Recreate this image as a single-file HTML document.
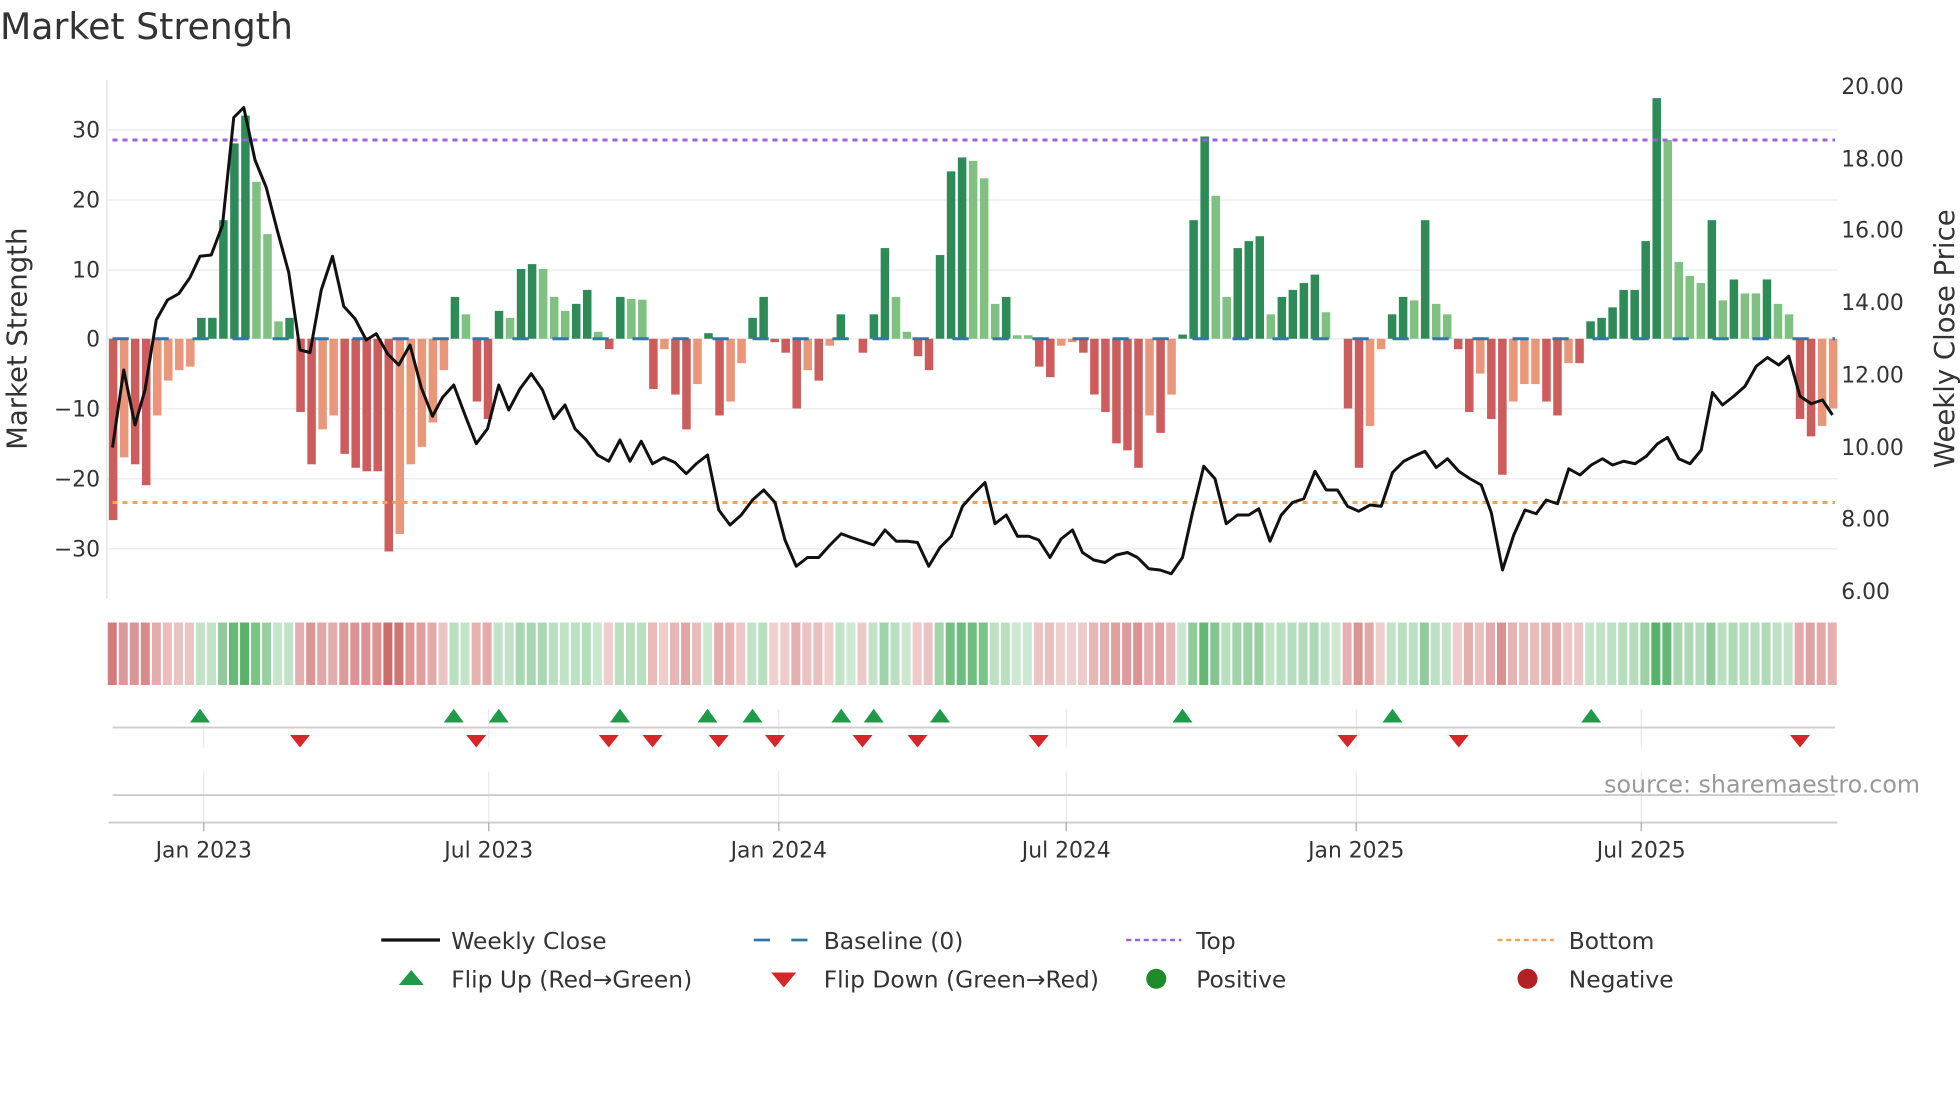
<!DOCTYPE html>
<html><head><meta charset="utf-8"><style>
html,body{margin:0;padding:0;background:#fff;width:1960px;height:1102px;overflow:hidden}
svg{display:block}
text{font-family:"DejaVu Sans","Liberation Sans",sans-serif;fill:#333}
</style></head><body>
<svg id="s" width="1960" height="1102" viewBox="0 0 1568 881.6" xmlns="http://www.w3.org/2000/svg">
<text x="0" y="31" font-size="29">Market Strength</text>
<g id="grid" stroke="#eceef3" stroke-width="1.2">
<line x1="86" x2="1470" y1="104" y2="104"/><line x1="86" x2="1470" y1="160" y2="160"/><line x1="86" x2="1470" y1="216" y2="216"/><line x1="86" x2="1470" y1="271" y2="271"/><line x1="86" x2="1470" y1="327" y2="327"/><line x1="86" x2="1470" y1="383" y2="383"/><line x1="86" x2="1470" y1="439" y2="439"/>
</g>
<line x1="85.5" x2="85.5" y1="64" y2="479" stroke="#e4e4e4" stroke-width="1.2"/>
<g font-size="17.5" text-anchor="end">
<text x="80" y="110">30</text><text x="80" y="166">20</text><text x="80" y="222">10</text><text x="80" y="277">0</text><text x="80" y="333">−10</text><text x="80" y="389">−20</text><text x="80" y="445">−30</text>
</g>
<g font-size="17.5">
<text x="1473" y="75">20.00</text><text x="1473" y="133">18.00</text><text x="1473" y="190">16.00</text><text x="1473" y="248">14.00</text><text x="1473" y="306">12.00</text><text x="1473" y="364">10.00</text><text x="1473" y="421">8.00</text><text x="1473" y="479">6.00</text>
</g>
<text font-size="22" transform="translate(21,271) rotate(-90)" text-anchor="middle">Market Strength</text>
<text font-size="22" transform="translate(1563,271) rotate(-90)" text-anchor="middle">Weekly Close Price</text>
<g id="bars"></g>
<line x1="90" x2="1468" y1="271" y2="271" stroke="#2f77ad" stroke-width="2.4" stroke-dasharray="13,19"/>
<line x1="90" x2="1468" y1="112" y2="112" stroke="#a35ee0" stroke-width="2.4" stroke-dasharray="4,4"/>
<line x1="90" x2="1468" y1="402" y2="402" stroke="#f3a25a" stroke-width="2.4" stroke-dasharray="4,4"/>
<polyline id="price" fill="none" stroke="#111" stroke-width="2.4" stroke-linejoin="round"></polyline>
<g id="heat"></g>
<g stroke="#e8eaf0" stroke-width="1">
<line x1="163" x2="163" y1="567" y2="598"/><line x1="391" x2="391" y1="567" y2="598"/><line x1="623" x2="623" y1="567" y2="598"/><line x1="853" x2="853" y1="567" y2="598"/><line x1="1085" x2="1085" y1="567" y2="598"/><line x1="1313" x2="1313" y1="567" y2="598"/>
<line x1="163" x2="163" y1="617" y2="658"/><line x1="391" x2="391" y1="617" y2="658"/><line x1="623" x2="623" y1="617" y2="658"/><line x1="853" x2="853" y1="617" y2="658"/><line x1="1085" x2="1085" y1="617" y2="658"/><line x1="1313" x2="1313" y1="617" y2="658"/>
</g>
<line x1="90" x2="1468" y1="582" y2="582" stroke="#ccc" stroke-width="1.5"/>
<line x1="90" x2="1468" y1="636" y2="636" stroke="#ccc" stroke-width="1.5"/>
<line x1="87" x2="1470" y1="658" y2="658" stroke="#ccc" stroke-width="1.5"/>
<g stroke="#aaa" stroke-width="1"><line x1="163" x2="163" y1="658" y2="665"/><line x1="391" x2="391" y1="658" y2="665"/><line x1="623" x2="623" y1="658" y2="665"/><line x1="853" x2="853" y1="658" y2="665"/><line x1="1085" x2="1085" y1="658" y2="665"/><line x1="1313" x2="1313" y1="658" y2="665"/></g>
<g id="flips"></g>
<g font-size="17.5" text-anchor="middle">
<text x="163" y="686">Jan 2023</text><text x="391" y="686">Jul 2023</text><text x="623" y="686">Jan 2024</text><text x="853" y="686">Jul 2024</text><text x="1085" y="686">Jan 2025</text><text x="1313" y="686">Jul 2025</text>
</g>
<text x="1536" y="634" font-size="19" text-anchor="end" style="fill:#999">source: sharemaestro.com</text>
<g font-size="18.7">
<line x1="305" x2="352" y1="752" y2="752" stroke="#111" stroke-width="2.6"/><text x="361" y="759">Weekly Close</text>
<line x1="603" x2="647" y1="752" y2="752" stroke="#2f77ad" stroke-width="2.2" stroke-dasharray="13,17"/><text x="659" y="759">Baseline (0)</text>
<line x1="901" x2="945" y1="752" y2="752" stroke="#a35ee0" stroke-width="2" stroke-dasharray="4,3"/><text x="957" y="759">Top</text>
<line x1="1198" x2="1243" y1="752" y2="752" stroke="#f3a25a" stroke-width="2" stroke-dasharray="4,3"/><text x="1255" y="759">Bottom</text>
<polygon points="319,788 339,788 329,776" fill="#1f9a48"/><text x="361" y="790">Flip Up (Red→Green)</text>
<polygon points="617,778 637,778 627,790" fill="#d62728"/><text x="659" y="790">Flip Down (Green→Red)</text>
<circle cx="925" cy="783" r="8" fill="#1f8a2a"/><text x="957" y="790">Positive</text>
<circle cx="1222" cy="783" r="8" fill="#b22222"/><text x="1255" y="790">Negative</text>
</g>
</svg>
<script>
var NS="http://www.w3.org/2000/svg";
function el(t,a,p){var e=document.createElementNS(NS,t);for(var k in a)e.setAttribute(k,a[k]);document.getElementById(p).appendChild(e);return e;}
var V=[[-26,1],[-17,0],[-18,1],[-21,1],[-11,0],[-6,0],[-4.5,0],[-4,0],[3,1],[3,1],[17,1],[28,1],[32,1],[22.5,0],[15,0],[2.5,0],[3,1],
[-10.5,1],[-18,1],[-13,0],[-11,0],[-16.5,1],[-18.5,1],[-19,1],[-19,1],[-30.5,1],[-28,0],[-18,0],[-15.5,0],[-12,0],[-4.5,0],[6,1],[3.5,0],
[-9,1],[-11.5,1],[4,1],[3,0],[10,1],[10.7,1],[10,0],[6,0],[4,0],[5,1],[7,1],[1,0],[-1.5,1],[6,1],[5.7,0],[5.6,0],[-7.2,1],[-1.5,0],[-8,1],[-13,1],[-6.5,0],[0.8,1],
[-11,1],[-9,0],[-3.5,0],[3,1],[6,1],[-0.5,1],[-2,1],[-10,1],[-4.5,0],[-6,1],[-1,0],[3.5,1],[0,0],[-2,1],[3.5,1],[13,1],[6,0],[1,0],[-2.5,1],[-4.5,1],
[12,1],[24,1],[26,1],[25.5,0],[23,0],[5,0],[6,1],[0.5,0],[0.5,0],[-4,1],[-5.5,1],[-1,0],[-0.5,0],[-2,1],[-8,1],[-10.5,1],[-15,1],[-16,1],[-18.5,1],[-11,0],[-13.5,1],[-8,0],[0.6,1],
[17,1],[29,1],[20.5,0],[6,0],[13,1],[14,1],[14.7,1],[3.5,0],[6,1],[7,1],[8,1],[9.2,1],[3.8,0],[0,0],[-10,1],[-18.5,1],[-12.5,0],[-1.5,0],
[3.5,1],[6,1],[5.5,0],[17,1],[5,0],[3.5,0],[-1.5,1],[-10.5,1],[-5,0],[-11.5,1],[-19.5,1],[-9,0],[-6.5,0],[-6.5,0],[-9,1],[-11,1],[-3.5,0],[-3.5,1],
[2.5,1],[3,1],[4.5,1],[7,1],[7,1],[14,1],[34.5,1],[28.5,0],[11,0],[9,0],[8,0],[17,1],[5.5,0],[8.5,1],[6.5,0],[6.5,0],[8.5,1],[5,0],[3.5,0],[-11.5,1],[-14,1],[-12.5,0],[-10,0]];
var n=V.length, x0=90.5, x1=1466.5, dx=(x1-x0)/(n-1);
var heatTop=498, heatH=50;
for(var i=0;i<n;i++){
 var v=V[i][0],d=V[i][1],x=x0+i*dx,y0=271,y=271-v*5.58;
 var c=v>=0?(d?"#2e8b57":"#80c080"):(d?"#cd5c5c":"#e9967a");
 if(Math.abs(v)>0.2) el("rect",{x:x-3.4,y:Math.min(y,y0),width:6.8,height:Math.abs(y-y0),fill:c},"bars");
 var a=0.25+0.6*Math.min(Math.abs(v),32)/32;
 var hc=v>=0?"rgba(60,165,80,"+a+")":"rgba(195,75,75,"+a+")";
 el("rect",{x:x-4.3,y:heatTop,width:7.2,height:heatH,fill:hc},"heat");
}
var P=[90,358,99,296,108,340,116,312,125,256,134,240,143,235,152,222,160,205,169,204,178,180,187,94,195,86,204,128,213,150,222,185,231,218,240,280,248,282,257,232,266,205,275,245,284,255,293,272,301,267,310,283,319,292,328,276,337,310,346,333,354,318,363,308,372,332,381,355,390,343,399,308,407,328,416,311,425,299,434,312,443,335,452,324,460,343,469,352,478,364,487,369,496,352,504,369,513,353,522,371,531,366,540,370,549,379,557,371,566,364,575,408,584,420,593,412,602,400,611,392,620,402,628,432,637,453,646,446,655,446,664,436,673,427,681,430,690,433,699,436,708,424,717,433,726,433,734,434,743,453,752,438,761,429,770,405,779,395,788,386,796,419,805,412,814,429,823,429,831,432,840,446,849,431,858,424,866,442,875,448,884,450,893,444,902,442,910,446,919,455,928,456,937,459,946,446,954,410,963,373,972,383,981,419,990,412,999,412,1007,407,1016,433,1025,412,1034,402,1043,399,1052,377,1061,392,1070,392,1078,405,1087,409,1096,404,1105,405,1114,378,1123,369,1131,365,1140,361,1149,374,1158,367,1167,377,1176,383,1185,388,1193,410,1202,456,1211,428,1220,408,1229,411,1237,400,1246,403,1255,375,1264,380,1273,372,1282,367,1290,372,1299,369,1308,371,1317,365,1326,355,1334,350,1343,367,1352,371,1361,360,1370,314,1378,324,1387,317,1396,309,1405,293,1414,286,1423,292,1431,285,1440,317,1449,323,1458,320,1466,332];
var s="";for(var j=0;j<P.length;j+=2)s+=P[j]+","+P[j+1]+" ";
document.getElementById("price").setAttribute("points",s);
[160,363,399,496,566,602,673,699,752,946,1114,1273].forEach(function(x){el("polygon",{points:(x-8)+",578 "+(x+8)+",578 "+x+",567",fill:"#1f9a48"},"flips");});
[240,381,487,522,575,620,690,734,831,1078,1167,1440].forEach(function(x){el("polygon",{points:(x-8)+",588 "+(x+8)+",588 "+x+",598",fill:"#d62728"},"flips");});
</script>
</body></html>
